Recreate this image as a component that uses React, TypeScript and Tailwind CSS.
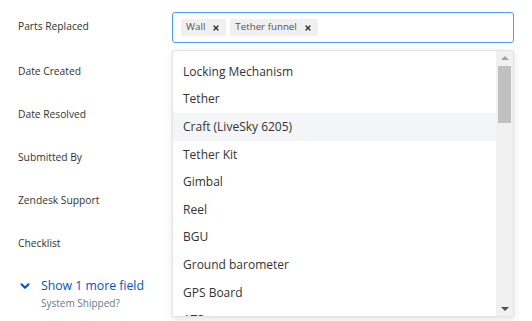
import { ChevronDown, X } from 'lucide-react';

const labels = ['Parts Replaced', 'Date Created', 'Date Resolved', 'Submitted By', 'Zendesk Support', 'Checklist'];

const options = [
    'Locking Mechanism',
    'Tether',
    'Craft (LiveSky 6205)',
    'Tether Kit',
    'Gimbal',
    'Reel',
    'BGU',
    'Ground barometer',
    'GPS Board',
    'ATS',
];

const tags = ['Wall', 'Tether funnel'];

export default function App() {
    return (
        <div className="w-[532px] h-[321px] bg-white overflow-hidden flex" style={{ fontFamily: '"Open Sans", "Noto Sans", sans-serif' }}>
            {/* Field labels */}
            <div className="w-[172px] shrink-0 pl-[18px] pt-[18px] flex flex-col">
                {labels.map((label, i) => (
                    <div key={label} className={`text-[10.25px] leading-4 text-[#333] ${i === 0 ? '' : i === 1 ? 'mt-[29px]' : 'mt-[27px]'}`}>
                        {label}
                    </div>
                ))}
                <div className="mt-[27px] flex items-start gap-[9px]">
                    <ChevronDown className="w-[14px] h-[14px] mt-[1px] text-[#0052cc]" strokeWidth={3.5} />
                    <div className="flex flex-col">
                        <span className="text-[12.25px] leading-4 text-[#0052cc]">Show 1 more field</span>
                        <span className="text-[10px] leading-3 mt-[3px] text-[#6b778c]">System Shipped?</span>
                    </div>
                </div>
            </div>

            {/* Multi-select */}
            <div className="relative w-[342px] pt-[12px]">
                <div className="h-[31px] border border-[#4c9aff] rounded-[3px] flex items-center gap-[4px] pl-[8px] bg-white">
                    {tags.map((tag) => (
                        <div key={tag} className="h-[17px] bg-[#f0f0f0] rounded-[2px] flex items-center pl-[5px] pr-[6px] gap-[7px] text-[9.75px] text-[#555]">
                            <span>{tag}</span>
                            <X className="w-[8px] h-[8px] text-[#333]" strokeWidth={4} />
                        </div>
                    ))}
                </div>

                {/* Dropdown menu */}
                <div className="absolute left-0 top-[50px] w-[342px] h-[267px] bg-white border border-[#e4e4e4] rounded-[2px] shadow-[0_2px_6px_rgba(0,0,0,0.12)] flex overflow-hidden">
                    <div className="flex-1 pt-[7px]">
                        {options.map((opt) => (
                            <div
                                key={opt}
                                className={`h-[27.6px] flex items-center pl-[10px] text-[12px] text-[#333] ${opt === 'Craft (LiveSky 6205)' ? 'bg-[#f4f5f7]' : ''}`}
                            >
                                {opt}
                            </div>
                        ))}
                    </div>
                    <div className="w-[17px] bg-[#f1f1f1] flex flex-col items-center pt-[5px] pb-[5px]">
                        <div className="w-0 h-0 border-l-[4px] border-r-[4px] border-b-[4px] border-l-transparent border-r-transparent border-b-[#a3a3a3]" />
                        <div className="mt-[6px] w-[13px] h-[57px] bg-[#c1c1c1]" />
                        <div className="flex-1" />
                        <div className="w-0 h-0 border-l-[4px] border-r-[4px] border-t-[4px] border-l-transparent border-r-transparent border-t-[#505050]" />
                    </div>
                </div>
            </div>
        </div>
    );
}
